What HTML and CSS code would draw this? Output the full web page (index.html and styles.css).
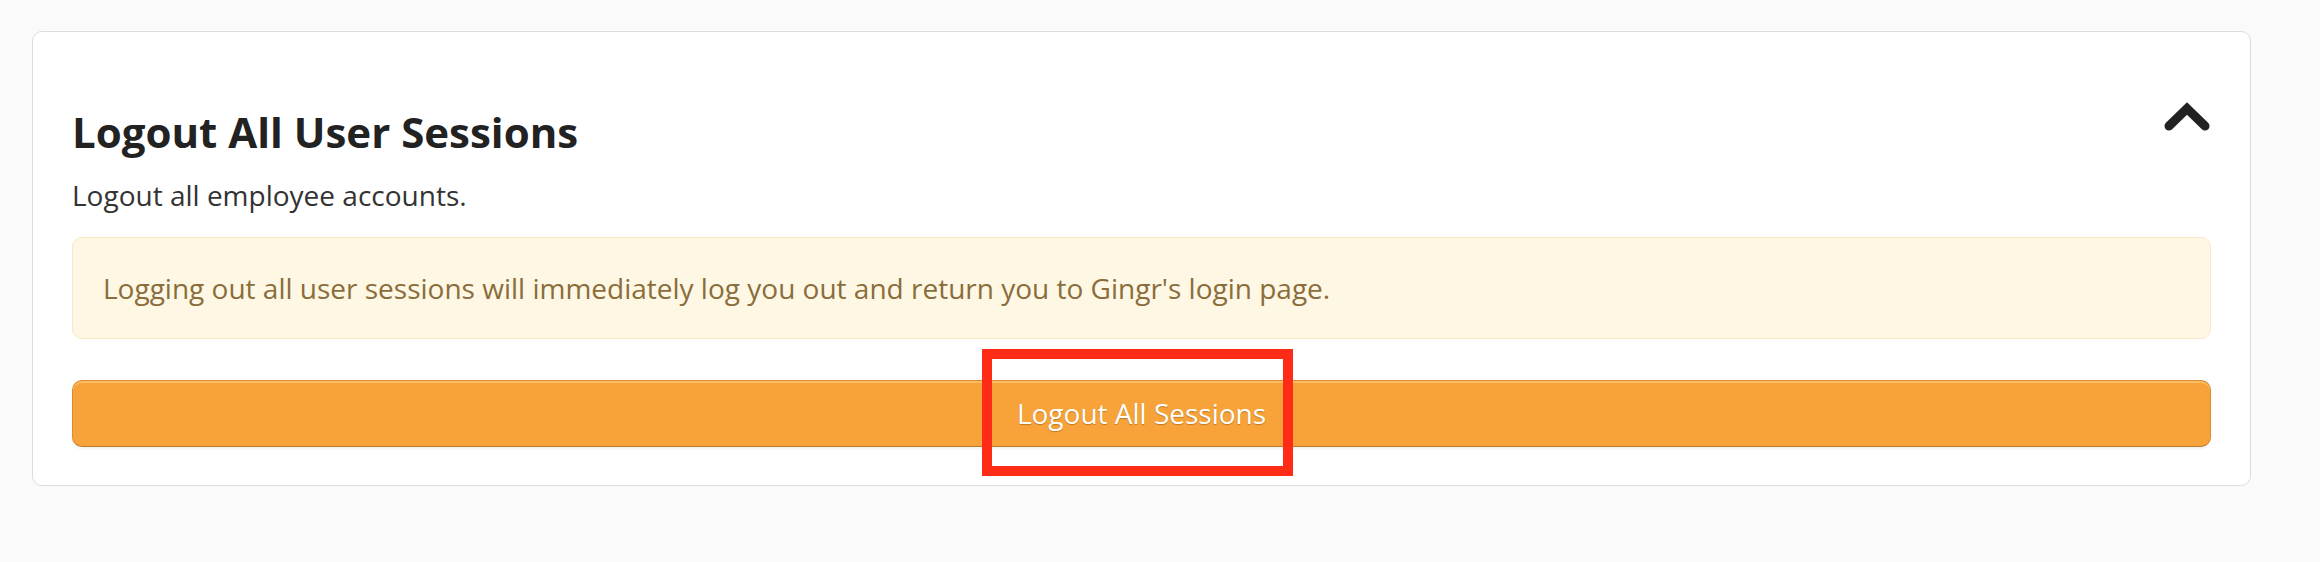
FILE: index.html
```html
<!DOCTYPE html>
<html lang="en">
<head>
<meta charset="utf-8">
<title>Logout All User Sessions</title>
<link rel="stylesheet" href="styles.css">
</head>
<body>
<div class="page">
  <section class="card">
    <div class="card-header">
      <h2 class="card-title">Logout All User Sessions</h2>
      <button class="collapse-toggle" aria-label="Collapse">
        <svg width="48" height="30" viewBox="0 0 48 30" aria-hidden="true">
          <polyline points="6,24 24,6.5 42,24" fill="none" stroke="#222" stroke-width="9" stroke-linecap="round" stroke-linejoin="miter"/>
        </svg>
      </button>
    </div>
    <p class="card-subtitle">Logout all employee accounts.</p>
    <div class="alert-warning">Logging out all user sessions will immediately log you out and return you to Gingr's login page.</div>
    <button class="btn-orange">Logout All Sessions</button>
  </section>
  <div class="highlight-box"></div>
</div>
</body>
</html>
```
FILE: styles.css
```css
html, body {
  margin: 0;
  padding: 0;
  background: #fafafa;
}
body {
  font-family: "Open Sans", "Liberation Sans", sans-serif;
  color: #333;
}
.page {
  position: relative;
  padding: 31px 0 0 32px;
}
.card {
  box-sizing: border-box;
  width: 2219px;
  background: #fff;
  border: 1px solid #dcdcdc;
  border-radius: 10px;
  padding: 70px 39px 38px 39px;
}
.card-header {
  display: flex;
  justify-content: space-between;
  align-items: flex-start;
}
.card-title {
  margin: 7px 0 0 0;
  font-size: 42px;
  line-height: 46px;
  font-weight: 700;
  color: #222;
}
.collapse-toggle {
  margin: 0;
  padding: 0;
  border: 0;
  background: none;
  display: block;
  width: 48px;
  height: 30px;
}
.collapse-toggle svg {
  display: block;
}
.card-subtitle {
  margin: 20px 0 0 0;
  font-size: 28px;
  line-height: 40px;
  color: #333;
}
.alert-warning {
  margin-top: 22px;
  padding: 30px;
  background: #fdf7e4;
  border: 1px solid #f8e8c3;
  border-radius: 10px;
  color: #8a6d3b;
  font-size: 28px;
  line-height: 40px;
}
.btn-orange {
  display: block;
  box-sizing: border-box;
  width: 100%;
  height: 67px;
  margin-top: 41px;
  padding: 12px 20px 13px;
  font-family: "Open Sans", "Liberation Sans", sans-serif;
  font-size: 28px;
  line-height: 40px;
  color: #fff;
  text-align: center;
  background: #f7a339;
  border: 1px solid #dc8c2c;
  border-bottom-color: #bd7a2a;
  border-radius: 10px;
  box-shadow: inset 0 2px 0 rgba(255, 210, 140, 0.55), 0 2px 3px rgba(0, 0, 0, 0.06);
  text-shadow: 0 1px 1px rgba(120, 70, 10, 0.45);
}
.highlight-box {
  position: absolute;
  left: 982px;
  top: 349px;
  width: 311px;
  height: 127px;
  box-sizing: border-box;
  border: 10px solid #fe2b17;
}
```
